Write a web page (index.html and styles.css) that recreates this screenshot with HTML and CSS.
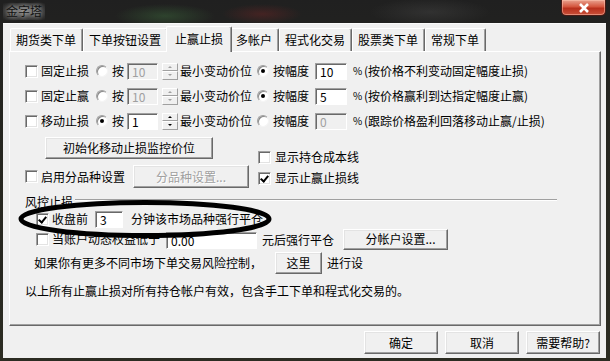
FILE: index.html
```html
<!DOCTYPE html>
<html lang="zh-CN">
<head>
<meta charset="UTF-8">
<title>金字塔</title>
<link rel="stylesheet" href="styles.css">
</head>
<body>

<div class="window">
  <div class="titlebar">
    <span class="title">金字塔</span>
    <span class="close">
      <svg width="12" height="10" viewBox="0 0 12 10"><path d="M2 1 L10 9 M10 1 L2 9" stroke="#fff" stroke-width="2.6"/></svg>
    </span>
  </div>

  <div class="client">
    <div class="tabs">
      <span class="tab">期货类下单</span>
      <span class="tab">下单按钮设置</span>
      <span class="tab active">止赢止损</span>
      <span class="tab">多帐户</span>
      <span class="tab">程式化交易</span>
      <span class="tab">股票类下单</span>
      <span class="tab">常规下单</span>
    </div>

    <div class="panel">
      <div class="row stop-row">
        <span class="cb"></span><span class="t-name">固定止损</span>
        <span class="radio r-by"></span><span class="t-by">按</span>
        <span class="input in-tick off">10</span>
        <span class="spin off"><i></i><i></i></span>
        <span class="t-tick">最小变动价位</span>
        <span class="radio r-pct on"></span><span class="t-by">按幅度</span>
        <span class="input in-pct">10</span>
        <span class="t-pc">%</span><span class="t-hint">(按价格不利变动固定幅度止损)</span>
      </div>
      <div class="row stop-row">
        <span class="cb"></span><span class="t-name">固定止赢</span>
        <span class="radio r-by"></span><span class="t-by">按</span>
        <span class="input in-tick off">10</span>
        <span class="spin off"><i></i><i></i></span>
        <span class="t-tick">最小变动价位</span>
        <span class="radio r-pct on"></span><span class="t-by">按幅度</span>
        <span class="input in-pct">5</span>
        <span class="t-pc">%</span><span class="t-hint">(按价格赢利到达指定幅度止赢)</span>
      </div>
      <div class="row stop-row">
        <span class="cb"></span><span class="t-name">移动止损</span>
        <span class="radio r-by on"></span><span class="t-by">按</span>
        <span class="input in-tick">1</span>
        <span class="spin"><i></i><i></i></span>
        <span class="t-tick">最小变动价位</span>
        <span class="radio r-pct"></span><span class="t-by">按幅度</span>
        <span class="input in-pct off">0</span>
        <span class="t-pc">%</span><span class="t-hint">(跟踪价格盈利回落移动止赢/止损)</span>
      </div>

      <div class="row row-init">
        <span class="btn btn-init">初始化移动止损监控价位</span>
        <span class="check-pair low"><span class="cb"></span><span>显示持仓成本线</span></span>
      </div>
      <div class="row row-split">
        <span class="cb"></span><span class="t-name">启用分品种设置</span>
        <span class="btn btn-split off">分品种设置...</span>
        <span class="check-pair"><span class="cb checked"></span><span>显示止赢止损线</span></span>
      </div>

      <div class="group-head">
        <span>风控止损</span><span class="etch"></span>
      </div>
      <div class="row row-close">
        <span class="cb checked"></span><span class="t-close">收盘前</span>
        <span class="input in-min">3</span>
        <span class="t-after">分钟该市场品种强行平仓</span>
      </div>
      <div class="row row-equity">
        <span class="cb"></span><span class="t-close">当账户动态权益低于</span>
        <span class="input in-eq">0.00</span>
        <span class="t-yuan">元后强行平仓</span>
        <span class="btn btn-acct">分帐户设置...</span>
      </div>
      <div class="row row-more">
        <span>如果你有更多不同市场下单交易风险控制，</span>
        <span class="btn btn-here">这里</span>
        <span class="t-go">进行设</span>
      </div>
      <div class="row row-note">
        <span>以上所有止赢止损对所有持仓帐户有效，包含手工下单和程式化交易的。</span>
      </div>
    </div>

    <div class="footer">
      <span class="btn btn-foot">确定</span>
      <span class="btn btn-foot">取消</span>
      <span class="btn btn-foot">需要帮助?</span>
    </div>
  </div>

  <svg class="mark" width="260" height="42" viewBox="0 0 260 42">
    <ellipse cx="128" cy="20" rx="124" ry="16.5" fill="none" stroke="#000" stroke-width="5"/>
  </svg>
</div>

</body>
</html>
```

FILE: styles.css
```css
* {
  box-sizing: border-box;
}

body {
  margin: 0;
  background: #1a1a1a;
  font-family: "Noto Sans CJK SC", "Noto Sans", sans-serif;
  font-size: 12px;
  line-height: 14px;
  color: #000;
}

.window {
  position: relative;
  width: 610px;
  height: 361px;
  padding: 0 4px 3px 3px;
  display: flex;
  flex-direction: column;
  background:
    radial-gradient(ellipse 50px 12px at 165px 16px, rgba(70, 130, 70, 0.35), transparent),
    radial-gradient(ellipse 40px 10px at 262px 14px, rgba(150, 40, 40, 0.3), transparent),
    radial-gradient(ellipse 60px 14px at 430px 12px, rgba(80, 80, 80, 0.35), transparent),
    linear-gradient(#202020, #262620 30%, #2c2c22);
}

/* title bar */
.titlebar {
  height: 23px;
  display: flex;
  align-items: flex-start;
}

.title {
  margin-top: 3px;
  padding: 1px 3px 2px 3px;
  color: #111;
  background: radial-gradient(ellipse at center, rgba(190, 190, 190, 0.6), rgba(140, 140, 140, 0.2) 70%, transparent);
  text-shadow: 0 0 4px rgba(255, 255, 255, 0.6);
}

.close {
  margin-left: auto;
  margin-right: 0;
  width: 45px;
  height: 16px;
  display: flex;
  align-items: center;
  justify-content: center;
  border: 1px solid #4a1a14;
  border-top: none;
  border-radius: 0 0 5px 5px;
  background: linear-gradient(#e9a28f, #d4553d 45%, #b8301c 55%, #c8503a);
  box-shadow: inset 0 0 0 1px rgba(255, 200, 180, 0.5);
}

/* client area */
.client {
  flex: 1;
  background: #f0f0f0;
  padding: 2px 5px 0 6px;
  border-top: 1px solid #fafafa;
}

.tabs {
  height: 25px;
  display: flex;
  align-items: flex-end;
  padding-left: 1px;
}

.tab {
  height: 23px;
  padding: 4px 6px 0 5px;
  border-left: 1px solid #fff;
  border-top: 1px solid #fff;
  border-right: 1px solid #696969;
  border-radius: 2px 2px 0 0;
  box-shadow: inset -1px 0 #a0a0a0;
  white-space: nowrap;
}

.tab.active {
  height: 26px;
  margin: 0 -2px -1px -2px;
  padding: 5px 8px 0 8px;
  background: #f0f0f0;
  position: relative;
  z-index: 1;
}

.panel {
  height: 275px;
  border: 1px solid;
  border-color: #fff #696969 #696969 #fff;
  box-shadow: inset -1px -1px #a0a0a0;
  padding-top: 10px;
}

/* rows */
.row {
  display: flex;
  align-items: center;
  white-space: nowrap;
}

.stop-row {
  height: 18px;
  padding-left: 15px;
  margin-bottom: 7px;
}

.t-name { margin-left: 3px; }
.r-by { margin-left: 7px; }
.t-by { margin-left: 4px; }
.in-tick { margin-left: 3px; width: 31px; }
.spin { margin-left: 4px; }
.t-tick { margin-left: 2px; }
.r-pct { margin-left: 5px; }
.in-pct { margin-left: 6px; width: 32px; }
.t-pc { margin-left: 6px; width: 8px; font-size: 10px; }
.t-hint { margin-left: 3px; }

.row-init {
  height: 28px;
  margin-top: 1px;
  align-items: flex-start;
  padding-left: 35px;
}

.btn-init {
  width: 168px;
  height: 22px;
}

.check-pair {
  display: flex;
  align-items: center;
  margin-left: 45px;
}

.check-pair .cb + span {
  margin-left: 4px;
}

.check-pair.low {
  align-self: flex-end;
  margin-bottom: 1px;
}

.row-split {
  height: 23px;
  padding-left: 15px;
}

.btn-split {
  margin-left: 8px;
  width: 116px;
  height: 23px;
}

.row-split .check-pair {
  margin-left: 9px;
  margin-top: 3px;
}

.group-head {
  display: flex;
  align-items: flex-start;
  height: 14px;
  margin-top: 7px;
  padding-left: 15px;
}

.etch {
  margin-left: 2px;
  margin-top: 4px;
  width: 482px;
  height: 2px;
  border-top: 1px solid #a0a0a0;
  border-bottom: 1px solid #fff;
}

.row-close {
  height: 18px;
  margin-top: 1px;
  padding-left: 26px;
}

.t-close { margin-left: 3px; }
.in-min { margin-left: 7px; width: 28px; }
.t-after { margin-left: 8px; }

.row-equity {
  height: 22px;
  padding-left: 26px;
}

.in-eq { margin-left: 6px; width: 91px; margin-top: 3px; }
.t-yuan { margin-left: 5px; margin-top: 2px; }

.btn-acct {
  margin-left: 9px;
  width: 105px;
  height: 21px;
  padding-left: 10px;
  justify-content: flex-start;
}

.row-more {
  height: 22px;
  margin-top: 2px;
  padding-left: 24px;
}

.btn-here {
  margin-left: 13px;
  width: 47px;
  height: 22px;
}

.t-go { margin-left: 5px; }

.row-note {
  height: 14px;
  margin-top: 10px;
  padding-left: 15px;
}

/* controls */
.cb {
  width: 13px;
  height: 13px;
  flex: none;
  background: #fff;
  border: 1px solid;
  border-color: #a0a0a0 #fff #fff #a0a0a0;
  box-shadow: inset 1px 1px #696969, inset -1px -1px #e3e3e3;
  position: relative;
}

.cb.checked::after {
  content: "";
  position: absolute;
  left: 3px;
  top: 1px;
  width: 3px;
  height: 6px;
  border: solid #000;
  border-width: 0 2px 2px 0;
  transform: rotate(40deg);
}

.radio {
  width: 12px;
  height: 12px;
  flex: none;
  border-radius: 50%;
  background: #fff;
  border: 1px solid;
  border-color: #a0a0a0 #f4f4f4 #f4f4f4 #a0a0a0;
  box-shadow: inset 1px 1px #8a8a8a;
  position: relative;
}

.radio.on::after {
  content: "";
  position: absolute;
  left: 3px;
  top: 3px;
  width: 4px;
  height: 4px;
  border-radius: 50%;
  background: #000;
}

.input {
  height: 17px;
  flex: none;
  background: #fff;
  border: 1px solid;
  border-color: #a0a0a0 #fff #fff #a0a0a0;
  box-shadow: inset 1px 1px #696969;
  padding: 1px 0 0 4px;
  font-size: 12px;
  line-height: 14px;
}

.input.off {
  background: #f0f0f0;
  color: #a0a0a0;
}

.spin {
  width: 16px;
  height: 17px;
  display: flex;
  flex-direction: column;
  flex: none;
}

.spin i {
  flex: 1;
  position: relative;
  background: #f0f0f0;
  border: 1px solid;
  border-color: #fff #a0a0a0 #a0a0a0 #fff;
}

.spin i::after {
  content: "";
  position: absolute;
  left: 5px;
  top: 2px;
  border-left: 2px solid transparent;
  border-right: 2px solid transparent;
  border-bottom: 2px solid #000;
}

.spin i + i::after {
  border-bottom: none;
  border-top: 2px solid #000;
}

.spin.off i::after {
  border-bottom-color: #a0a0a0;
  border-top-color: #a0a0a0;
}

.btn {
  display: flex;
  align-items: center;
  justify-content: center;
  flex: none;
  background: #f0f0f0;
  border: 1px solid;
  border-color: #fff #696969 #696969 #fff;
  box-shadow: inset -1px -1px #a0a0a0, inset 1px 1px #e3e3e3;
}

.btn.off {
  color: #a0a0a0;
  text-shadow: 1px 1px #fff;
}

.footer {
  display: flex;
  justify-content: flex-end;
  gap: 7px;
  margin-top: 5px;
  padding-right: 1px;
}

.btn-foot {
  width: 74px;
  height: 23px;
}

/* hand-drawn annotation on the screenshot */
.mark {
  position: absolute;
  left: 17px;
  top: 199px;
}
```
